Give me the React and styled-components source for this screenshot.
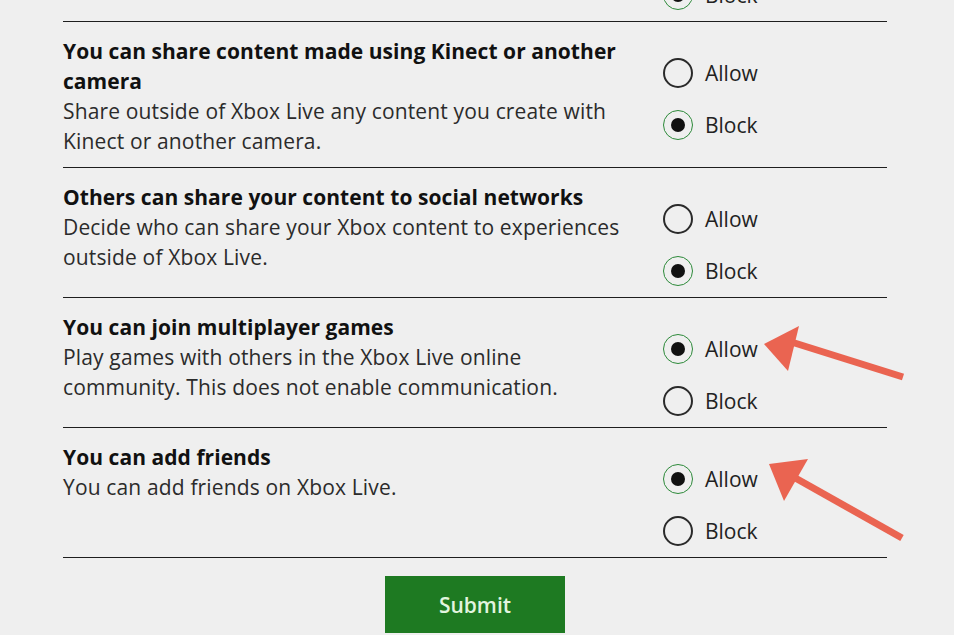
import React, { useState } from 'react'
import styled, { createGlobalStyle } from 'styled-components';

const settings = [
    {
        id: 'creations',
        value: 'block',
        minH: 130,
    },
    {
        id: 'kinect',
        title: 'You can share content made using Kinect or another camera',
        text: 'Share outside of Xbox Live any content you create with Kinect or another camera.',
        value: 'block',
    },
    {
        id: 'social',
        title: 'Others can share your content to social networks',
        text: 'Decide who can share your Xbox content to experiences outside of Xbox Live.',
        value: 'block',
    },
    {
        id: 'multiplayer',
        title: 'You can join multiplayer games',
        text: 'Play games with others in the Xbox Live online community. This does not enable communication.',
        value: 'allow',
    },
    {
        id: 'friends',
        title: 'You can add friends',
        text: 'You can add friends on Xbox Live.',
        value: 'allow',
    },
];

const Radio = ({ checked, label, onClick }) => (
    <RadioRow onClick={onClick}>
        <Circle $checked={checked}>{checked && <Dot />}</Circle>
        <RadioLabel>{label}</RadioLabel>
    </RadioRow>
)

const App = () => {
    const [values, setValues] = useState(
        Object.fromEntries(settings.map(s => [s.id, s.value]))
    );

    const pick = (id, v) => {
        setValues({ ...values, [id]: v });
    }

    return (
        <>
            <GlobalStyle />
            <Page>
                <List>
                    {settings.map(s => (
                        <Section key={s.id} $minH={s.minH}>
                            <TextCol>
                                {s.title && <Title>{s.title}</Title>}
                                {s.text && <Desc>{s.text}</Desc>}
                            </TextCol>
                            <Radios>
                                <Radio label="Allow" checked={values[s.id] === 'allow'} onClick={() => pick(s.id, 'allow')} />
                                <Radio label="Block" checked={values[s.id] === 'block'} onClick={() => pick(s.id, 'block')} />
                            </Radios>
                        </Section>
                    ))}
                </List>
                <ButtonWrap>
                    <SubmitBtn>Submit</SubmitBtn>
                </ButtonWrap>
                <Arrows viewBox="0 0 954 635">
                    <line x1="903" y1="377" x2="785" y2="340" />
                    <polygon points="764,344 799,326 788,371" />
                    <line x1="902" y1="538" x2="790" y2="475" />
                    <polygon points="769,464 808,459 784,501" />
                </Arrows>
            </Page>
        </>
    )
}

export default App;

const GlobalStyle = createGlobalStyle`
    html, body {
        margin: 0;
        padding: 0;
        background: #efefef;
    }
    body {
        font-family: "Open Sans", "Noto Sans", "Liberation Sans", sans-serif;
        color: #1b1b1b;
    }
`

const Page = styled.div`
    position: relative;
    width: 954px;
    height: 635px;
    overflow: hidden;
`

const List = styled.div`
    width: 824px;
    margin: -108px 0 0 63px;
`

const Section = styled.div`
    display: flex;
    align-items: flex-start;
    border-bottom: 1px solid #1e1e1e;
    min-height: ${({ $minH }) => ($minH ? `${$minH - 1}px` : 'auto')};
`

const TextCol = styled.div`
    width: 575px;
    padding: 14px 0 11px;
    margin-right: 25px;
`

const Title = styled.div`
    font-size: 21px;
    font-weight: 700;
    line-height: 30px;
    letter-spacing: 0.05px;
    color: #111;
`

const Desc = styled.div`
    font-size: 21px;
    line-height: 30px;
    letter-spacing: 0.15px;
    color: #2b2b2b;
`

const Radios = styled.div`
    padding-top: 25px;
    display: flex;
    flex-direction: column;
`

const RadioRow = styled.div`
    height: 52px;
    display: flex;
    align-items: center;
    cursor: pointer;
`

const Circle = styled.span`
    box-sizing: border-box;
    width: 30px;
    height: 30px;
    border-radius: 50%;
    border: ${({ $checked }) => ($checked ? '1.5px solid #2d8a3a' : '2px solid #2a2a2a')};
    display: flex;
    align-items: center;
    justify-content: center;
`

const Dot = styled.span`
    width: 14px;
    height: 14px;
    border-radius: 50%;
    background: #111;
`

const RadioLabel = styled.span`
    margin-left: 12px;
    font-size: 21px;
    color: #222;
`

const ButtonWrap = styled.div`
    width: 824px;
    margin: 18px 0 0 63px;
    display: flex;
    justify-content: center;
`

const SubmitBtn = styled.button`
    width: 180px;
    height: 57px;
    border: none;
    background: #1e7a22;
    color: #e2f5df;
    font-family: inherit;
    font-size: 21px;
    font-weight: 600;
    cursor: pointer;
`

const Arrows = styled.svg`
    position: absolute;
    top: 0;
    left: 0;
    width: 954px;
    height: 635px;
    pointer-events: none;

    line {
        stroke: #ea6451;
        stroke-width: 7;
    }
    polygon {
        fill: #ea6451;
    }
`
